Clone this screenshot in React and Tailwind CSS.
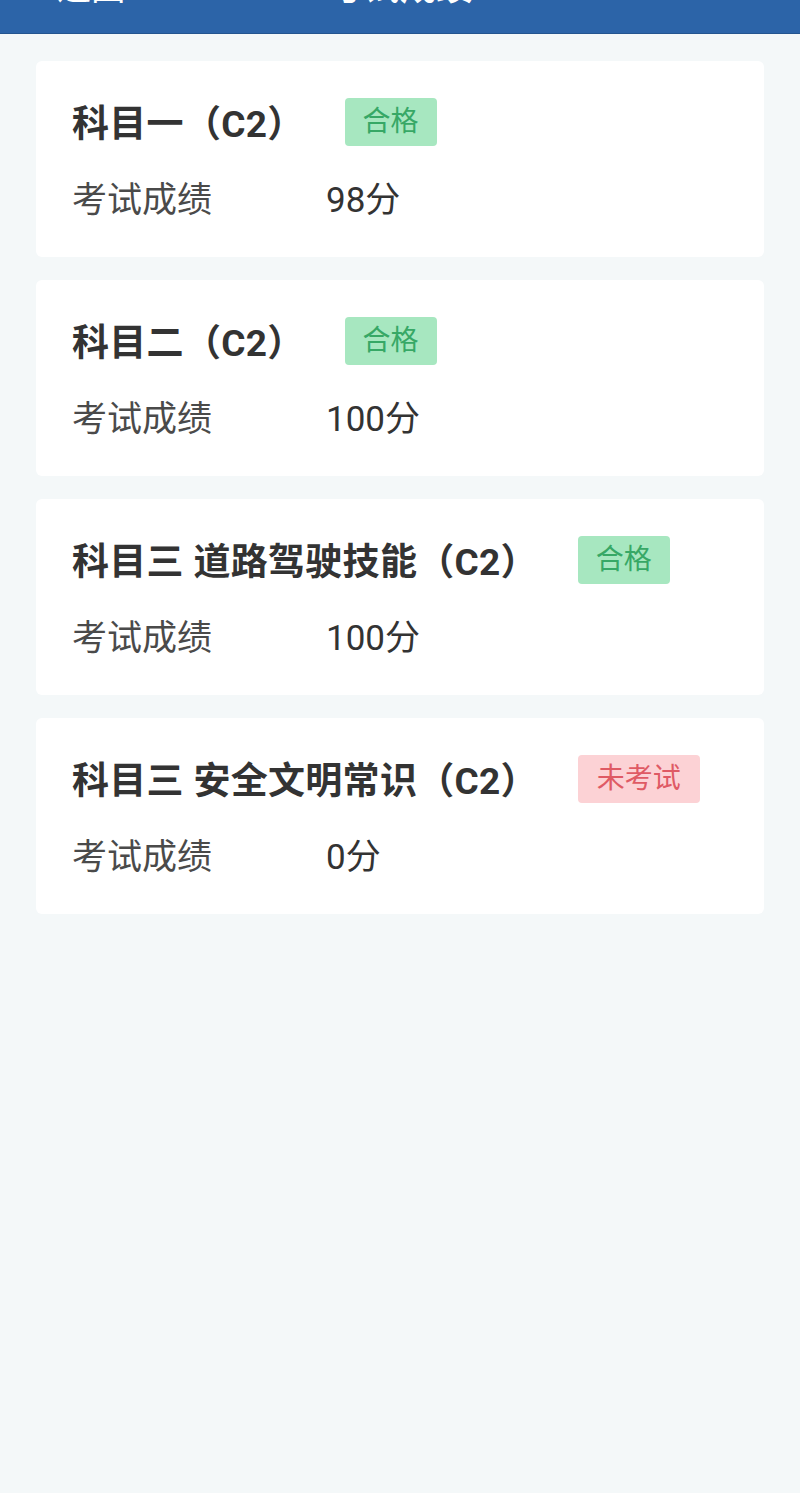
import React from "react";

const items = [
  { title: "科目一（C2）", status: "pass", score: "98分" },
  { title: "科目二（C2）", status: "pass", score: "100分" },
  { title: "科目三 道路驾驶技能（C2）", status: "pass", score: "100分" },
  { title: "科目三 安全文明常识（C2）", status: "none", score: "0分" },
];

function Badge({ status }) {
  if (status === "pass") {
    return (
      <span className="ml-[40px] flex h-[48px] items-center rounded-[4px] bg-[#a7e7c0] px-[18px] text-[28px] leading-none text-[#37a866]">
        合格
      </span>
    );
  }
  return (
    <span className="ml-[40px] flex h-[48px] items-center rounded-[4px] bg-[#fcd2d5] px-[19px] text-[28px] leading-none text-[#df5a64]">
      未考试
    </span>
  );
}

export default function App() {
  return (
    <div
      className="min-h-[1493px] w-full bg-[#f4f8f9]"
      style={{ fontFamily: 'Roboto, "Noto Sans CJK SC", sans-serif' }}
    >
      <div className="h-[34px] overflow-hidden border-b border-[#24558f] bg-[#2c64a8]">
        <div className="relative -mt-[37px] flex h-[50px] items-center px-[34px] leading-none text-white">
          <span className="flex items-center gap-2 text-[34px] leading-none">
            <span className="text-[30px] leading-none">&lt;</span>返回
          </span>
          <span className="absolute left-0 right-0 text-center text-[36px] font-bold leading-none">
            考试成绩
          </span>
        </div>
      </div>
      <div className="flex flex-col gap-[23px] px-[36px] pt-[27px]">
        {items.map((it, i) => (
          <div key={i} className="flex h-[196px] flex-col rounded-[6px] bg-white pl-[36px] pt-[36px]">
            <div className="flex h-[50px] items-center">
              <span className="pt-[4px] text-[37px] font-bold leading-none tracking-[0.3px] text-[#333333]">{it.title}</span>
              <Badge status={it.status} />
            </div>
            <div className="mt-[31px] flex h-[44px] items-center text-[35px] leading-none">
              <span className="w-[254px] text-[#4a4a4a]">考试成绩</span>
              <span className="text-[#333333]">{it.score}</span>
            </div>
          </div>
        ))}
      </div>
    </div>
  );
}
